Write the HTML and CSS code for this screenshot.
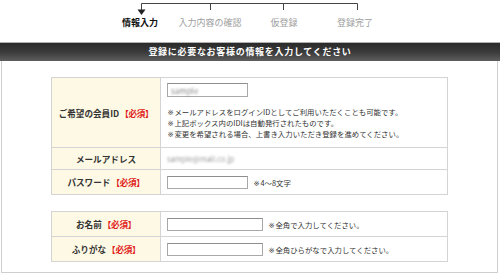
FILE: index.html
```html
<!DOCTYPE html>
<html lang="ja">
<head>
<meta charset="utf-8">
<link rel="stylesheet" href="styles.css">
</head>
<body>
<div class="page">
  <div class="steps">
    <svg class="steps-line" width="500" height="15" viewBox="0 0 500 15">
      <path d="M141.5 3.5H357.5M141.5 3.5V10M210.5 3.5V10M283.5 3.5V10M357.5 3.5V10" stroke="#444" stroke-width="1" fill="none"/>
      <polygon points="137.5,9.5 145.5,9.5 141.5,15" fill="#222"/>
    </svg>
    <div class="steps-labels">
      <span class="step active">情報入力</span>
      <span class="step">入力内容の確認</span>
      <span class="step">仮登録</span>
      <span class="step">登録完了</span>
    </div>
  </div>
  <div class="bar">登録に必要なお客様の情報を入力してください</div>
  <div class="panel">
    <div class="form-table t1">
      <div class="label">ご希望の会員ID <span class="req">【必須】</span></div>
      <div class="value value-id">
        <div class="input w81"><span class="blur">sample</span></div>
        <div class="notes">
          <div><span class="mark">※</span>メールアドレスをログインIDとしてご利用いただくことも可能です。</div>
          <div><span class="mark">※</span>上記ボックス内のIDIは自動発行されたものです。</div>
          <div><span class="mark">※</span>変更を希望される場合、上書き入力いただき登録を進めてください。</div>
        </div>
      </div>
      <div class="label">メールアドレス</div>
      <div class="value row"><span class="blur mail">sample@mail.co.jp</span></div>
      <div class="label">パスワード <span class="req">【必須】</span></div>
      <div class="value row"><div class="input w81"></div><span class="note"><span class="mark">※</span>4〜8文字</span></div>
    </div>
    <div class="form-table t2">
      <div class="label">お名前 <span class="req">【必須】</span></div>
      <div class="value row"><div class="input w96"></div><span class="note"><span class="mark">※</span>全角で入力してください。</span></div>
      <div class="label">ふりがな <span class="req">【必須】</span></div>
      <div class="value row"><div class="input w96"></div><span class="note"><span class="mark">※</span>全角ひらがなで入力してください。</span></div>
    </div>
  </div>
</div>
</body>
</html>
```
FILE: styles.css
```css
* { box-sizing: border-box; }
html, body { margin: 0; padding: 0; background: #fff; }
body {
  font-family: "Noto Sans CJK JP", "DejaVu Sans", sans-serif;
  color: #333;
  width: 500px;
}
.steps { height: 42px; }
.steps-line { display: block; }
.steps-labels {
  display: grid;
  grid-template-columns: 70px 70px 78px 64px;
  padding-left: 105px;
  height: 16px;
}
.step {
  text-align: center;
  font-size: 9px;
  line-height: 16px;
  color: #a0a0a0;
  white-space: nowrap;
}
.step.active { color: #111; font-weight: bold; }

.bar {
  height: 19px;
  border-top: 1px solid #b0b0b0;
  background: linear-gradient(to bottom, #2a2a2a 0%, #3a3a3a 50%, #5e5e5e 100%);
  color: #fff;
  font-weight: bold;
  font-size: 9px;
  letter-spacing: 0.7px;
  line-height: 18px;
  text-align: center;
}
.panel {
  margin-left: 1px;
  width: 497px;
  height: 212px;
  border: 1px solid #cfcfcf;
  border-top: none;
  padding: 16px 0 0 49px;
}
.form-table {
  display: grid;
  grid-template-columns: 109px 1fr;
  width: 397px;
  border-top: 1px solid #d4d4d4;
  border-left: 1px solid #d4d4d4;
}
.t1 { grid-template-rows: 70px 22px 25px; }
.t2 { grid-template-rows: 25px 25px; margin-top: 16px; }
.label, .value {
  border-right: 1px solid #d4d4d4;
  border-bottom: 1px solid #d4d4d4;
}
.label {
  background: #fdf9e4;
  display: flex;
  align-items: center;
  justify-content: center;
  font-size: 8.6px;
  font-weight: bold;
  color: #333;
  white-space: nowrap;
}
.req { color: #e0201a; margin-left: 1px; letter-spacing: -0.3px; }
.value { padding-left: 6px; background: #fff; }
.value.row { display: flex; align-items: center; }
.value-id { padding-top: 5px; }
.input {
  height: 13px;
  border: 1px solid #a8a8a8;
  border-top-color: #8e8e8e;
  background: #fff;
  display: flex;
  align-items: center;
  padding-left: 3px;
}
.w81 { width: 81px; }
.w96 { width: 96px; }
.value-id .input { height: 14px; }
.blur {
  filter: blur(1.2px);
  color: #888;
  font-size: 8px;
}
.mail { font-size: 7.5px; color: #999; }
.notes {
  margin-top: 10px;
  font-size: 7.4px;
  line-height: 10px;
  color: #333;
  white-space: nowrap;
}
.note {
  font-size: 7.4px;
  margin-left: 5px;
  color: #333;
  white-space: nowrap;
}
.mark {
  display: inline-block;
  font-family: "DejaVu Sans", "Noto Sans CJK JP", sans-serif;
  color: #444;
  width: 7.4px;
  text-align: center;
}
```
